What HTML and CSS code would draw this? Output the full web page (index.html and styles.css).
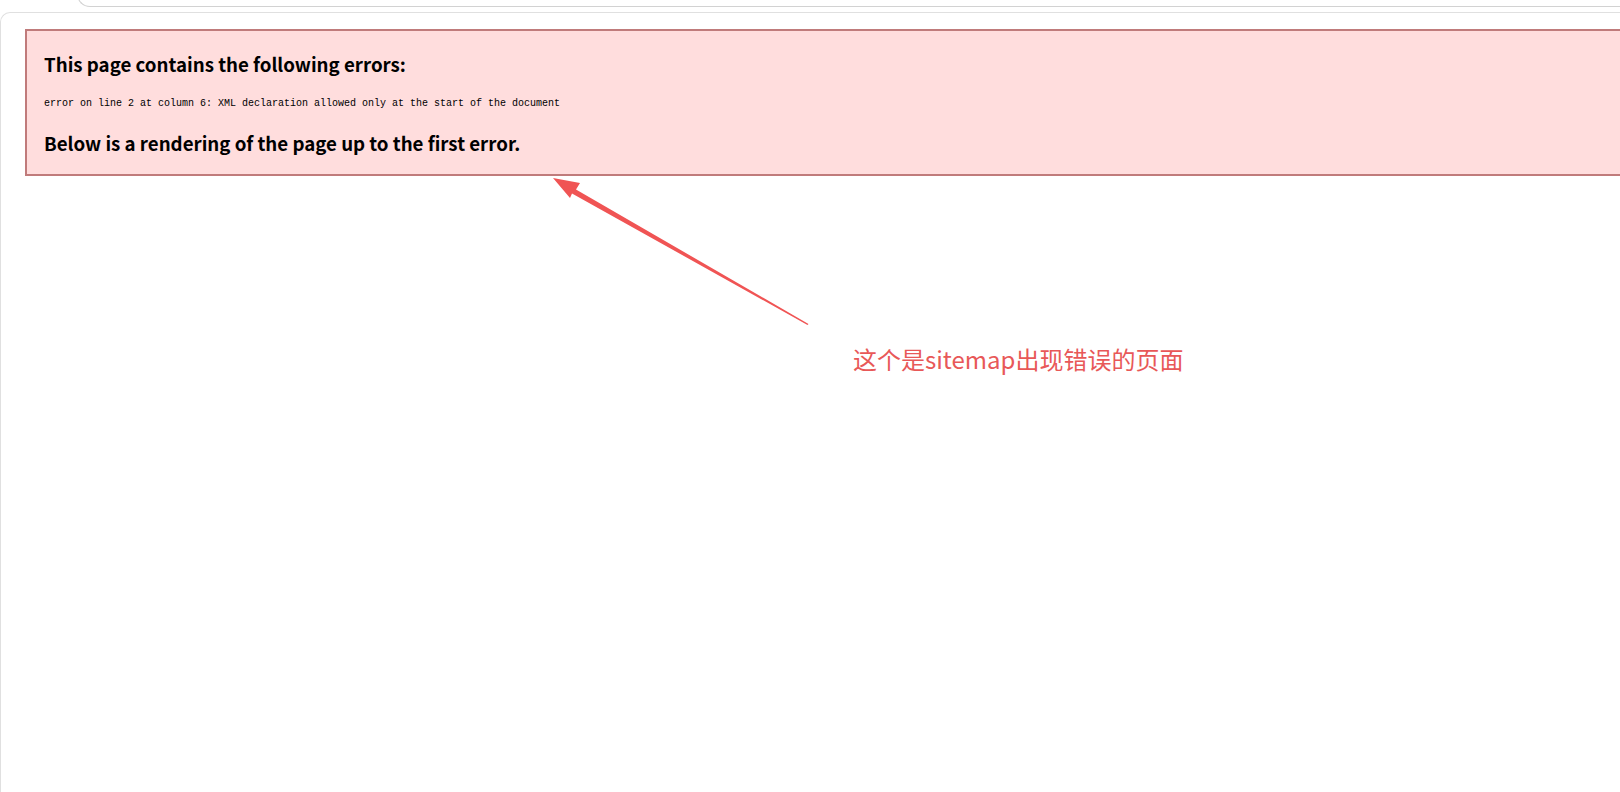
FILE: index.html
```html
<!DOCTYPE html>
<html lang="zh-CN">
<head>
<meta charset="utf-8">
<title>sitemap error</title>
<link rel="stylesheet" href="styles.css">
</head>
<body>
<div class="topbar"></div>
<div class="panel">
  <div class="errbox">
    <h3 class="title">This page contains the following errors:</h3>
    <div class="errline">error on line 2 at column 6: XML declaration allowed only at the start of the document</div>
    <h3 class="title below">Below is a rendering of the page up to the first error.</h3>
  </div>
</div>
<svg class="arrow" width="1620" height="792" viewBox="0 0 1620 792" xmlns="http://www.w3.org/2000/svg">
  <polygon points="553,178 580,183 576,189.5 808.5,324 807.5,325 572,193.5 570,198" fill="#f05454"/>
</svg>
<div class="note">这个是sitemap出现错误的页面</div>
</body>
</html>
```
FILE: styles.css
```css
html, body {
  margin: 0;
  padding: 0;
  background: #ffffff;
  overflow: hidden;
  width: 1620px;
  height: 792px;
}
body {
  position: relative;
  font-family: "Noto Sans CJK SC", "Noto Sans", sans-serif;
}
.topbar {
  margin-left: 77px;
  margin-top: -20px;
  height: 25px;
  border: 1px solid #d2d2d2;
  border-right: none;
  border-bottom-left-radius: 13px;
}
.panel {
  margin-top: 5px;
  margin-right: -60px;
  height: 763px;
  border: 1px solid #e0e0e0;
  border-right: none;
  border-bottom: none;
  border-top-left-radius: 10px;
  padding: 16px 0 0 24px;
}
.errbox {
  height: 143px;
  border: 2px solid #c07b7b;
  border-right: none;
  background: #fdd;
  padding: 0 0 0 17px;
  color: #000;
  display: flex;
  flex-direction: column;
}
.title {
  margin: 21px 0 0 0;
  font-size: 18.7px;
  line-height: 24px;
  font-weight: 700;
  white-space: pre;
}
.errline {
  margin-top: 22px;
  font-family: "Liberation Mono", "DejaVu Sans Mono", monospace;
  font-size: 10px;
  line-height: 12px;
  white-space: pre;
}
.title.below {
  margin-top: 21px;
}
.arrow {
  position: absolute;
  left: 0;
  top: 0;
  pointer-events: none;
}
.note {
  position: absolute;
  left: 853px;
  top: 344px;
  font-size: 24px;
  line-height: 30px;
  color: #e85858;
  white-space: nowrap;
}
```
